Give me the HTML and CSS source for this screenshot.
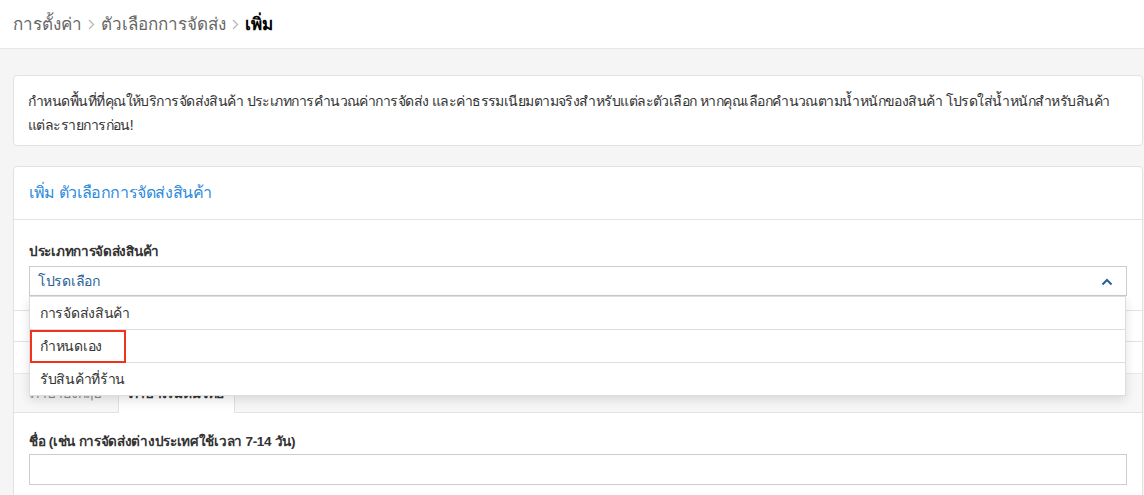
FILE: index.html
```html
<!DOCTYPE html>
<html lang="th">
<head>
<meta charset="utf-8">
<link rel="stylesheet" href="styles.css">
</head>
<body>
<header class="topbar">
  <nav class="crumbs">
    <span class="crumb">การตั้งค่า</span>
    <svg class="sep" width="7" height="11" viewBox="0 0 7 11"><path d="M1 1 L5.5 5.5 L1 10" fill="none" stroke="#b5b5b5" stroke-width="1.2"/></svg>
    <span class="crumb">ตัวเลือกการจัดส่ง</span>
    <svg class="sep" width="7" height="11" viewBox="0 0 7 11"><path d="M1 1 L5.5 5.5 L1 10" fill="none" stroke="#b5b5b5" stroke-width="1.2"/></svg>
    <span class="crumb current">เพิ่ม</span>
  </nav>
</header>
<main class="page">
  <section class="card info">
    <p>กำหนดพื้นที่ที่คุณให้บริการจัดส่งสินค้า ประเภทการคำนวณค่าการจัดส่ง และค่าธรรมเนียมตามจริงสำหรับแต่ละตัวเลือก หากคุณเลือกคำนวณตามน้ำหนักของสินค้า โปรดใส่น้ำหนักสำหรับสินค้า แต่ละรายการก่อน!</p>
  </section>
  <section class="card form">
    <div class="card-head">เพิ่ม ตัวเลือกการจัดส่งสินค้า</div>
    <div class="card-body">
      <label class="lbl">ประเภทการจัดส่งสินค้า</label>
      <div class="select-wrap">
        <div class="select">
          <span>โปรดเลือก</span>
          <svg class="chev" width="12" height="8" viewBox="0 0 12 8"><path d="M1.5 6.5 L6 2 L10.5 6.5" fill="none" stroke="#2a5f96" stroke-width="2"/></svg>
        </div>
        <ul class="menu">
          <li>การจัดส่งสินค้า</li>
          <li><span class="mark">กำหนดเอง</span></li>
          <li>รับสินค้าที่ร้าน</li>
        </ul>
      </div>
    </div>
    <div class="hidden-rows">
      <div class="hrow first"></div>
      <div class="hrow"></div>
      <div class="hgap"></div>
    </div>
    <div class="tabs">
      <div class="tab">ภาษาอังกฤษ</div>
      <div class="tab active">ภาษาเริ่มต้นไทย</div>
    </div>
    <div class="tab-body">
      <label class="lbl">ชื่อ (เช่น การจัดส่งต่างประเทศใช้เวลา 7-14 วัน)</label>
      <div class="input"></div>
    </div>
  </section>
</main>
</body>
</html>
```
FILE: styles.css
```css
* { box-sizing: border-box; }
html, body { margin: 0; padding: 0; }
body {
  background: #f5f5f5;
  font-family: "Liberation Sans", "Noto Sans", sans-serif;
  color: #333;
  width: 1144px;
  height: 495px;
  overflow: hidden;
  letter-spacing: -0.3px;
}
.topbar {
  background: #fff;
  height: 49px;
  border-bottom: 1px solid #e6e6e6;
  display: flex;
  align-items: center;
  padding: 0 13px 2px;
}
.crumbs { display: flex; align-items: center; gap: 6px; font-size: 17px; letter-spacing: 0; }
.crumb { color: #666; }
.crumb.current { color: #000; font-weight: 600; }
.sep { margin-top: 2px; }
.page { padding: 26px 1px 0 13px; }
.card {
  background: #fff;
  border: 1px solid #e2e2e2;
  border-radius: 4px;
}
.info { padding: 13px 14px 8px; margin-bottom: 20px; }
.info p { margin: 0; font-size: 14px; line-height: 24px; color: #333; letter-spacing: -0.55px; }
.card-head {
  height: 53px;
  border-bottom: 1px solid #e2e2e2;
  padding: 0 15px 2px;
  display: flex;
  align-items: center;
  font-size: 16px;
  letter-spacing: -0.4px;
  color: #2e8bdc;
}
.card-body { padding: 23px 15px 0; }
.lbl {
  display: block;
  font-size: 13.5px;
  font-weight: 700;
  color: #333;
  line-height: 18px;
  margin-bottom: 5px;
}
.select-wrap { position: relative; }
.select {
  height: 30px;
  border: 1px solid #ccc;
  display: flex;
  align-items: center;
  justify-content: space-between;
  padding: 0 13px 0 8px;
  font-size: 14px;
  color: #2a5f96;
}
.chev { margin-top: 1px; }
.menu {
  position: absolute;
  left: 0;
  right: 1px;
  top: 30px;
  margin: 0;
  padding: 0;
  list-style: none;
  background: #fff;
  border: 1px solid #ddd;
  border-top: none;
  box-shadow: 0 4px 10px rgba(0,0,0,0.12);
  z-index: 5;
}
.menu li {
  height: 33px;
  border-top: 1px solid #ddd;
  display: flex;
  align-items: center;
  font-size: 14px;
  color: #333;
}
.menu li:first-child { padding-left: 10px; }
.menu li:last-child { padding-left: 10px; }
.mark {
  display: flex;
  align-items: center;
  height: 33px;
  width: 96px;
  margin-top: -1px;
  margin-bottom: -1px;
  padding-left: 8px;
  border: 2px solid #f2321b;
}
.hrow { height: 31px; border-bottom: 1px solid #e2e2e2; }
.hrow.first { height: 15px; }
.hgap { height: 31px; }
.tabs {
  height: 40px;
  background: #f7f7f7;
  border-top: 1px solid #e8e8e8;
  border-bottom: 1px solid #e2e2e2;
  display: flex;
  align-items: flex-end;
}
.tab {
  height: 39px;
  width: 104px;
  display: flex;
  align-items: center;
  justify-content: center;
  font-size: 14px;
  color: #888;
}
.tab.active {
  width: 117px;
  background: #fff;
  color: #333;
  font-weight: 700;
  border-left: 1px solid #e2e2e2;
  border-right: 1px solid #e2e2e2;
  height: 40px;
  margin-bottom: -1px;
}
.tab-body { padding: 20px 15px 20px; }
.tab-body .lbl { margin-bottom: 3px; }
.input { height: 31px; border: 1px solid #ccc; }
```
